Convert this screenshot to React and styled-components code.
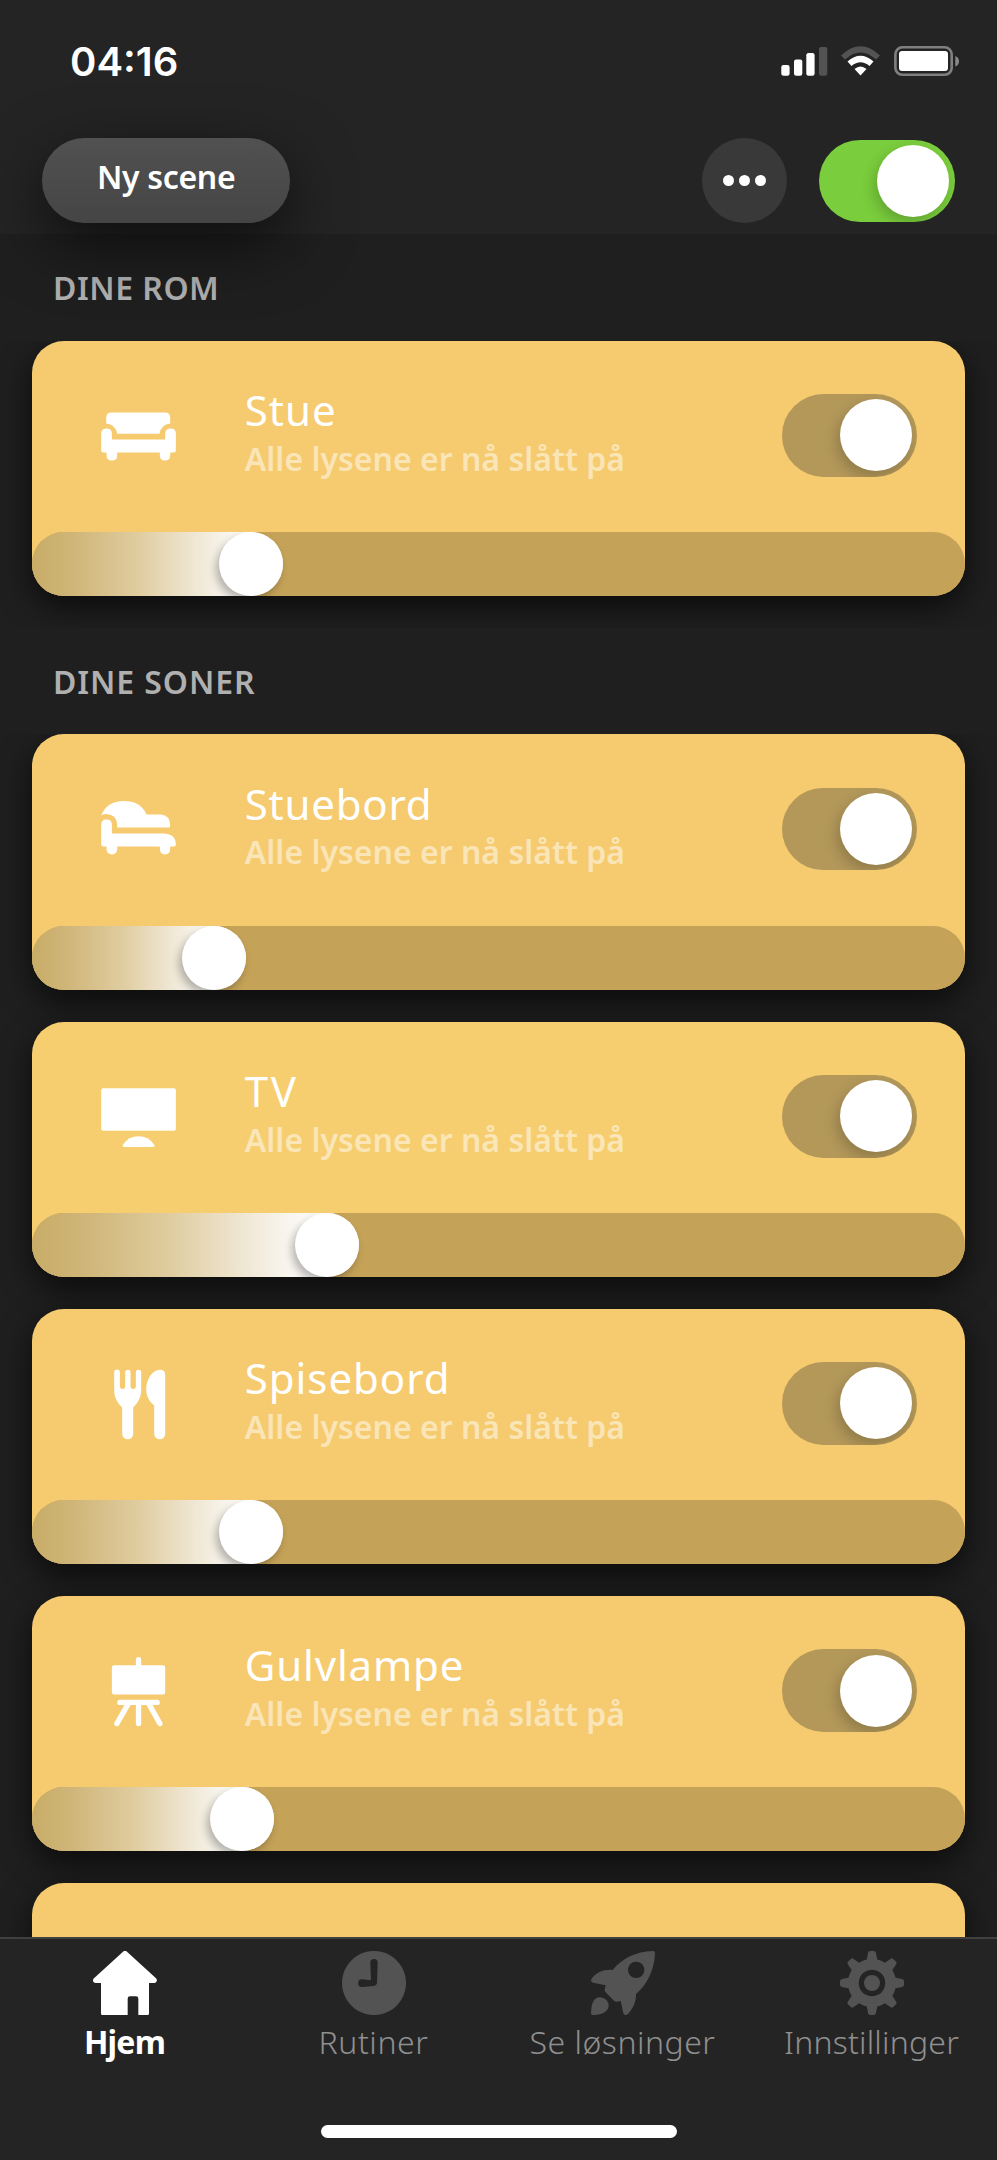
import React from "react";
import styled, { createGlobalStyle } from "styled-components";

const GlobalStyle = createGlobalStyle`
  * {
    box-sizing: border-box;
  }

  body {
    margin: 0;
    background-color: #1f1f1f;
    font-family: "Noto Sans", "Open Sans", sans-serif;
    color: white;
  }
`;

const Screen = styled.div`
  display: flex;
  flex-direction: column;
  width: 997px;
  height: 2160px;
  overflow: hidden;
  background-color: #1f1f1f;
`;

const Header = styled.header`
  position: relative;
  z-index: 2;
  flex: none;
  height: 234px;
  background-color: #242424;
`;

const StatusBar = styled.div`
  display: flex;
  justify-content: space-between;
  height: 138px;
  padding: 37px 35px 0 70px;
`;

const Clock = styled.span`
  font-family: "Inter", sans-serif;
  font-size: 40px;
  font-weight: 600;
  line-height: 49px;
`;

const StatusIcons = styled.svg`
  width: 182px;
  height: 34px;
  margin-top: 7px;
`;

const Toolbar = styled.div`
  display: flex;
  align-items: center;
  height: 85.4px;
  padding: 0 42.3px 0 42.4px;
`;

const SceneButton = styled.button`
  width: 247.5px;
  height: 85.4px;
  padding: 0 0 7px;
  margin-right: auto;
  border: none;
  border-radius: 43px;
  background: linear-gradient(#515151, #454545);
  box-shadow: 0 21px 64px rgba(0, 0, 0, 0.62);
  color: white;
  font-family: inherit;
  font-size: 32px;
  font-weight: 600;
  line-height: 78px;
  letter-spacing: -0.3px;
`;

const MoreButton = styled.button`
  display: flex;
  align-items: center;
  justify-content: center;
  gap: 5px;
  width: 85px;
  height: 85px;
  padding: 0;
  margin-right: 32px;
  border: none;
  border-radius: 50%;
  background-color: #393939;
`;

const Dot = styled.span`
  width: 11px;
  height: 11px;
  border-radius: 50%;
  background-color: white;
`;

const Track = styled.div`
  display: flex;
  align-items: center;
  justify-content: flex-end;
  flex: none;
  width: 135.5px;
  height: 82.6px;
  padding: 5.5px;
  border-radius: 42px;
  overflow: hidden;
  background-color: ${(p) => p.$color};
`;

const Knob = styled.div`
  width: 72px;
  height: 72px;
  border-radius: 50%;
  background-color: white;
  box-shadow: -3px 6px 14px rgba(0, 0, 0, 0.2);
`;

const MainSwitch = styled.div`
  margin-top: 1px;
`;

const List = styled.main`
  flex: 1;
  min-height: 0;
  overflow: hidden;
`;

const SectionTitle = styled.h2`
  position: relative;
  height: 106.6px;
  margin: 0;
  padding-left: 53px;
  background-color: #1f1f1f;
  color: #b0b0b0;
  font-size: 32px;
  font-weight: 600;
  line-height: 108px;
  letter-spacing: ${(p) => p.$spacing}px;
`;

const Cards = styled.section`
  display: flex;
  flex-direction: column;
  gap: 31.9px;
  padding: 0 32px 31.9px;
`;

const Card = styled.article`
  flex: none;
  height: 255.3px;
  border-radius: 32px;
  background-color: ${(p) => p.$color};
  box-shadow: 0 11px 32px rgba(0, 0, 0, 0.65);
`;

const CardHead = styled.div`
  display: flex;
  align-items: flex-start;
  height: 191.5px;
  padding-right: 48px;
`;

const CardIcon = styled.svg`
  flex: none;
  width: 85px;
  height: 85px;
  margin: 53.2px 0 0 63.8px;
  fill: white;
`;

const CardText = styled.div`
  flex: 1;
  padding: 47.5px 0 0 64px;
  white-space: nowrap;
`;

const Name = styled.h3`
  margin: 0 0 4.6px;
  font-size: 42px;
  font-weight: 400;
  line-height: 44px;
  letter-spacing: ${(p) => p.$spacing}px;
`;

const Status = styled.p`
  margin: 0;
  color: rgba(255, 255, 255, 0.5);
  font-size: 32px;
  font-weight: 600;
  line-height: 44px;
`;

const CardSwitch = styled.div`
  margin-top: 53.4px;
`;

const Slider = styled.div`
  height: 63.8px;
  border-radius: 32px;
  overflow: hidden;
  background-color: #c4a258;
`;

const SliderFill = styled.div`
  display: flex;
  justify-content: flex-end;
  height: 100%;
  border-radius: 0 32px 32px 0;
  background: linear-gradient(
    90deg,
    #c8ac68 0%,
    #cfb578 16%,
    #dfcc9f 42%,
    #efe6d2 64%,
    #f8f5ee 78%,
    #ffffff 92%
  );
`;

const SliderKnob = styled.div`
  width: 64px;
  height: 64px;
  border-radius: 50%;
  background-color: white;
  box-shadow: -3px 5px 9px rgba(0, 0, 0, 0.28);
`;

const TabBar = styled.nav`
  position: relative;
  z-index: 2;
  display: flex;
  flex-direction: column;
  align-items: center;
  flex: none;
  height: 223.5px;
  border-top: 2.6px solid #404040;
  background-color: #242424;
`;

const Tabs = styled.div`
  display: grid;
  grid-template-columns: repeat(4, 1fr);
  width: 100%;
  height: 186px;
  padding: 12.6px 1px 0 0;
`;

const Tab = styled.div`
  display: flex;
  flex-direction: column;
  align-items: center;
  color: ${(p) => (p.$active ? "white" : "#8f8f8f")};
  font-size: 32px;
  font-weight: ${(p) => (p.$active ? 700 : 300)};
  line-height: 44px;
  letter-spacing: ${(p) => p.$spacing}px;
  white-space: nowrap;

  svg {
    width: 64px;
    height: 64px;
    margin-bottom: 4.5px;
    fill: ${(p) => (p.$active ? "white" : "#535353")};
  }
`;

const HomeIndicator = styled.div`
  width: 356px;
  height: 13.5px;
  border-radius: 7px;
  background-color: white;
`;

const SofaIcon = () => (
  <CardIcon viewBox="287.4 190.5 255 255">
    <path d="M318 279V262Q318 246 334 246H494Q510 246 510 262V279Q483 281 478 310H351Q346 281 318 279Z" />
    <path d="M303 310Q303 294 319 294Q335 294 335 310V327H495V310Q495 294 511 294Q527 294 527 310V360Q527 366 521 366H510V374Q510 390 494.500 390Q479 390 479 374V366H351V374Q351 390 335 390Q319 390 319 374V366H309Q303 366 303 360Z" />
  </CardIcon>
);

const LoungeIcon = () => (
  <CardIcon viewBox="287.4 202.8 255 255">
    <path d="M303 285Q321 242 371 242Q421 242 439 282H482Q510 284 510 316Q510 321 505 321H351V312Q349 283 319 281Q310 281 303 285Z" />
    <path d="M303 313Q303 297 319 297Q335 297 335 313V339H490Q527 341 527 372Q527 378 521 378H510V386Q510 402 494.500 402Q479 402 479 386V378H351V386Q351 402 335 402Q319 402 319 386V378H309Q303 378 303 372Z" />
  </CardIcon>
);

const TvIcon = () => (
  <CardIcon viewBox="287.4 164 255 255">
    <rect x="303" y="204" width="224" height="127" rx="6" />
    <path d="M371 380Q365 379 368 373Q386 348 415 348Q444 348 462 373Q465 379 459 380Z" />
  </CardIcon>
);

const CutleryIcon = () => (
  <CardIcon viewBox="287.4 185.7 255 255">
    <path d="M342 217A8.500 8.500 0 0 1 359 217V258Q359 267 367 267Q375 267 375 258V217A8 8 0 0 1 391 217V258Q391 267 399 267Q407 267 407 258V217A8 8 0 0 1 423 217V272C423 292 412 309 399 322V401A16.500 16.500 0 0 1 366 401V322C352 309 342 292 342 272Z" />
    <path d="M495 225V401A16.500 16.500 0 0 1 462 401V316C446 303 438 287 438 267C438 238 457 209 479 209Q495 209 495 225Z" />
  </CardIcon>
);

const EaselIcon = () => (
  <CardIcon viewBox="287.4 177.3 255 255">
    <path d="M407 226V209A8 8 0 0 1 423 209V226H488Q495 226 495 233V307Q495 314 488 314H342Q335 314 335 307V233Q335 226 342 226Z" />
    <path
      d="M359 337.500H471M415 340V401M384 342L350 401M446 342L479 401"
      fill="none"
      stroke="white"
      strokeWidth="16"
      strokeLinecap="round"
    />
  </CardIcon>
);

const HomeIcon = () => (
  <svg viewBox="276 154 192 192">
    <path d="M366 156Q372 151 378 156L465 236Q469 241 467 245Q465 250 460 250H444V341Q444 347 438 347H412V297Q412 290 405 290H387Q380 290 380 297V347H306Q300 347 300 341V250H284Q278 250 276 245Q275 240 279 236Z" />
  </svg>
);

const ClockIcon = () => (
  <svg viewBox="1026 154 192 192">
    <path
      fillRule="evenodd"
      d="M1122 154a96 96 0 1 0 0.100 0ZM1111 189A11 11 0 0 1 1133 189L1131 250Q1130 258 1122 259L1086 262A11 11 0 0 1 1086 239L1113 242Z"
    />
  </svg>
);

const RocketIcon = () => (
  <svg viewBox="282 154 192 192">
    <path
      fillRule="evenodd"
      d="M347 211C375 176 417 156 467 154Q474 154 474 161C472 211 451 255 417 283C418 306 408 327 393 343Q383 350 379 341L371 304L360 306Q355 307 351 303L326 278Q322 274 323 269L326 257L288 249Q279 246 284 237C299 218 321 208 347 211ZM417.500 186a24.500 24.500 0 1 0 0.100 0Z"
    />
    <path d="M309 293A26 26 0 0 1 335 319C333 338 313 344 289 347Q282 347 282 340C283 313 289 293 309 293Z" />
  </svg>
);

const GearIcon = () => (
  <svg viewBox="-96 -96 192 192">
    {[0, 45, 90, 135, 180, 225, 270, 315].map((angle) => (
      <path
        key={angle}
        transform={`rotate(${angle})`}
        d="M-17 -64L-12 -90Q-11 -96 -6 -96H6Q11 -96 12 -90L17 -64Z"
      />
    ))}
    <path
      fillRule="evenodd"
      d="M0 -72A72 72 0 1 0 0.100 -72ZM0 -40A40 40 0 1 1 -0.100 -40Z"
    />
    <circle r="24" />
  </svg>
);

const Switch = ({ color }) => (
  <Track $color={color}>
    <Knob />
  </Track>
);

const LightCard = ({ name, spacing, level, icon: Icon, color = "#f6cb6f" }) => (
  <Card $color={color}>
    <CardHead>
      <Icon />
      <CardText>
        <Name $spacing={spacing}>{name}</Name>
        <Status>Alle lysene er nå slått på</Status>
      </CardText>
      <CardSwitch>
        <Switch color="#b3985a" />
      </CardSwitch>
    </CardHead>
    <Slider>
      <SliderFill style={{ width: level }}>
        <SliderKnob />
      </SliderFill>
    </Slider>
  </Card>
);

const zones = [
  { name: "Stuebord", spacing: 0.75, level: 214, icon: LoungeIcon },
  { name: "TV", spacing: 2.6, level: 326.5, icon: TvIcon, color: "#f6ce6f" },
  { name: "Spisebord", spacing: 0.95, level: 251.4, icon: CutleryIcon },
  { name: "Gulvlampe", spacing: 0.85, level: 241.6, icon: EaselIcon },
];

const tabs = [
  { label: "Hjem", spacing: -0.8, icon: HomeIcon, active: true },
  { label: "Rutiner", spacing: 0.6, icon: ClockIcon },
  { label: "Se løsninger", spacing: 0.5, icon: RocketIcon },
  { label: "Innstillinger", spacing: 0.2, icon: GearIcon },
];

export default function App() {
  return (
    <Screen>
      <GlobalStyle />
      <Header>
        <StatusBar>
          <Clock>04:16</Clock>
          <StatusIcons viewBox="780 44 182 34">
            <g fill="white">
              <rect x="781.3" y="65" width="8.300" height="10.700" rx="2.200" />
              <rect x="794" y="59.400" width="8.300" height="16.300" rx="2.200" />
              <rect x="806.3" y="53" width="8.300" height="22.700" rx="2.200" />
              <rect x="819" y="47" width="8.300" height="28.700" rx="2.200" fill="#535353" />
              <path
                d="M841 55.500Q860.500 37 880 55.500L876 59.500Q860.500 45.500 845 59.500Z"
                fill="#535353"
              />
              <path d="M847.500 61.500Q860.500 50 873.500 61.500L869.500 66Q860.500 58.500 851.500 66Z" />
              <path d="M854.500 69Q860.500 64 866.500 69L860.500 75.500Z" />
              <rect x="899" y="51" width="49" height="20" rx="3" />
            </g>
            <rect
              x="895.4"
              y="47.300"
              width="56.300"
              height="27.500"
              rx="7"
              fill="none"
              stroke="#808080"
              strokeWidth="2.600"
            />
            <path d="M955.300 56Q959 57.500 959 61.200Q959 65 955.300 66.500Z" fill="#8a8a8a" />
          </StatusIcons>
        </StatusBar>
        <Toolbar>
          <SceneButton>Ny scene</SceneButton>
          <MoreButton>
            <Dot />
            <Dot />
            <Dot />
          </MoreButton>
          <MainSwitch>
            <Switch color="#7acd3c" />
          </MainSwitch>
        </Toolbar>
      </Header>

      <List>
        <SectionTitle $spacing={0.5}>DINE ROM</SectionTitle>
        <Cards>
          <LightCard name="Stue" spacing={1} level={251.4} icon={SofaIcon} />
        </Cards>
        <SectionTitle $spacing={0.9}>DINE SONER</SectionTitle>
        <Cards>
          {zones.map((zone) => (
            <LightCard key={zone.name} {...zone} />
          ))}
          <Card $color="#f6cb6f" />
        </Cards>
      </List>

      <TabBar>
        <Tabs>
          {tabs.map(({ label, spacing, icon: Icon, active }) => (
            <Tab key={label} $active={active} $spacing={spacing}>
              <Icon />
              {label}
            </Tab>
          ))}
        </Tabs>
        <HomeIndicator />
      </TabBar>
    </Screen>
  );
}
